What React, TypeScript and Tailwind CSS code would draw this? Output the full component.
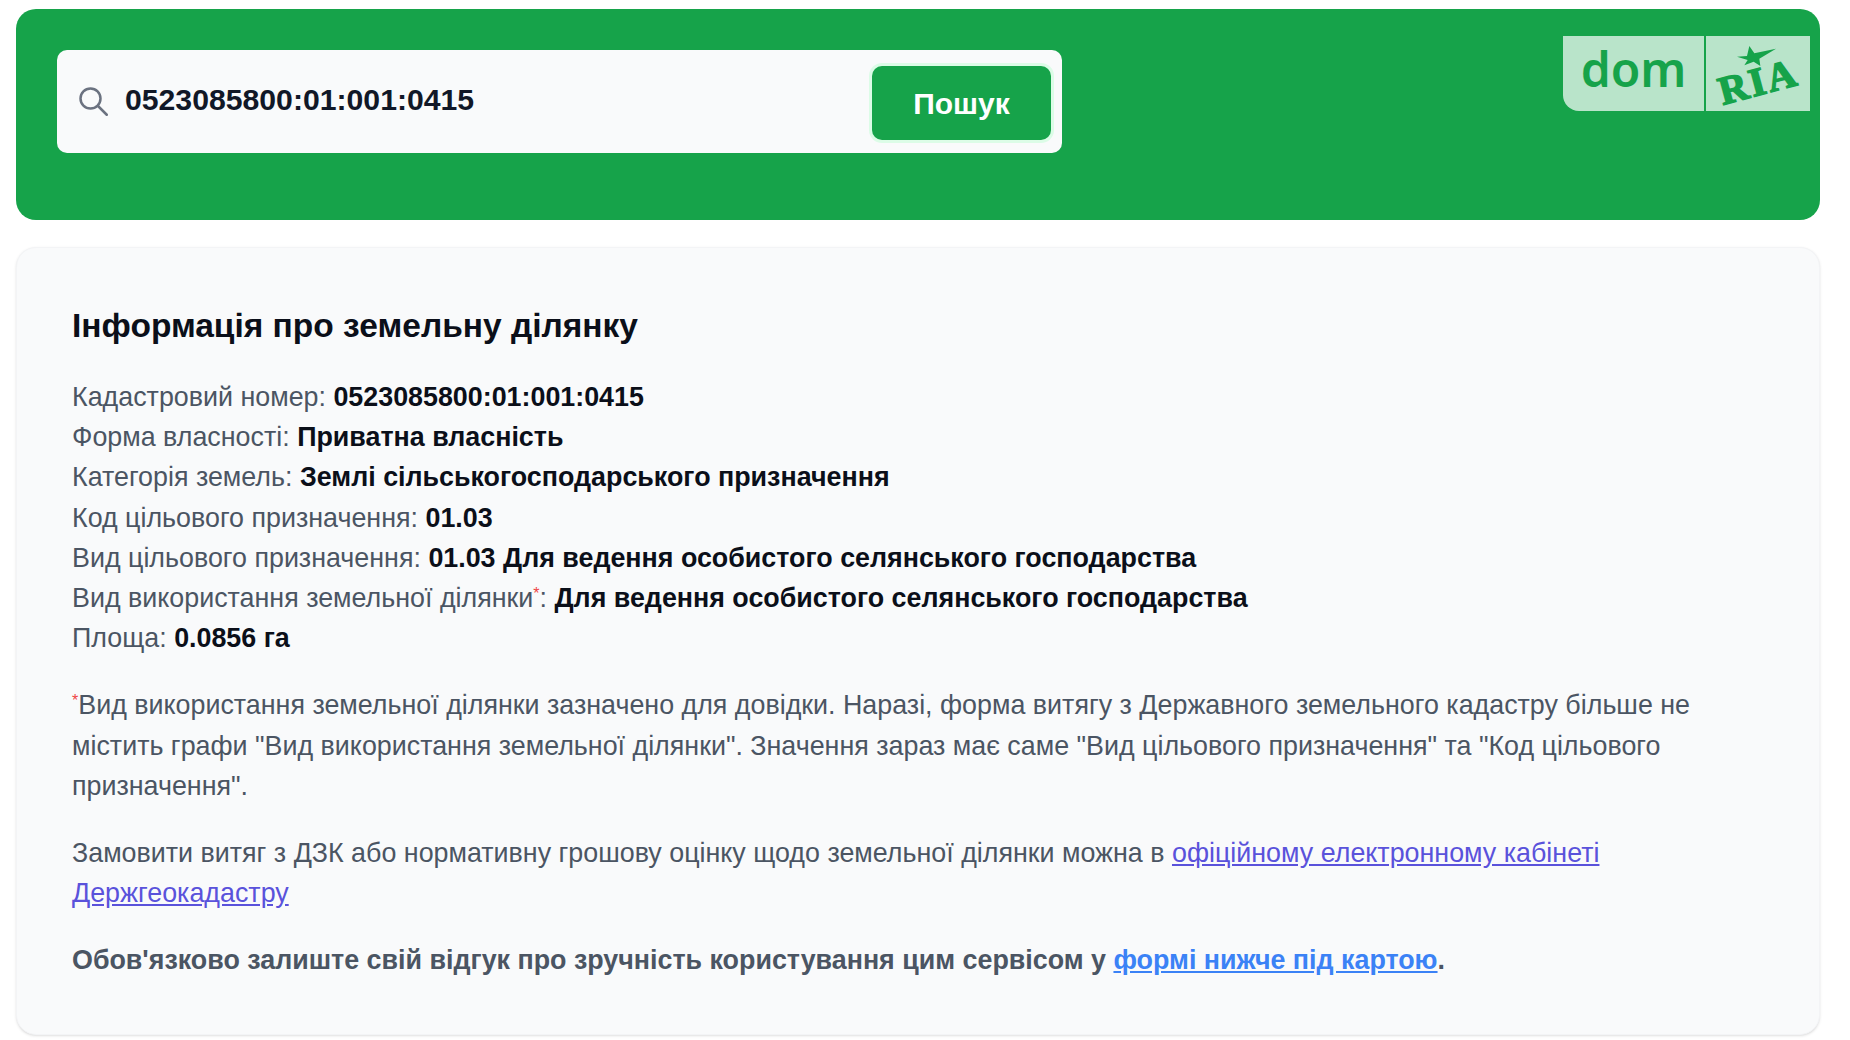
function Star() {
  return (
    <svg viewBox="0 0 117 60" className="absolute left-[31px] top-[10px] h-[20px] w-[39px]" fill="#16a34a">
      <polygon points="0,32 30,30 37,0 52,22 117,8 67,38 70,60 50,47 22,58 32,42" />
    </svg>
  );
}

function Logo() {
  return (
    <div className="flex h-[75px] w-[247px] gap-[2px]">
      <div className="flex w-[141px] items-center justify-center rounded-bl-[16px] bg-[#b9e4ca] pb-[9px] font-['Noto_Sans',sans-serif] text-[48px] font-semibold leading-none text-[#16a34a]">
        dom
      </div>
      <div className="relative flex-1 bg-[#b9e4ca]">
        <Star />
        <div className="absolute left-[12px] top-[26px] -rotate-[15deg] font-['Liberation_Serif',serif] text-[40px] font-bold leading-none tracking-[2.5px] text-[#16a34a] [-webkit-text-stroke:1.5px_#16a34a]">
          RIA
        </div>
      </div>
    </div>
  );
}

function Row({ label, value, star }: { label: string; value: string; star?: boolean }) {
  return (
    <div>
      {label}
      {star && <sup className="text-[16px] leading-none text-[#ef4444]">*</sup>}
      {": "}
      <b className="font-bold text-[#0b0f19]">{value}</b>
    </div>
  );
}

export default function App() {
  return (
    <div className="bg-white pb-[7px] pl-4 pr-[30px] pt-[9px] font-['Liberation_Sans',Arial,sans-serif]">
      <header className="flex h-[211px] items-start justify-between rounded-[20px] bg-[#16a34a] pl-[41px] pr-[10px] pt-[27px]">
        <div className="mt-[14px] flex h-[103px] w-[1005px] items-center rounded-[10px] bg-[#f9fafb] pl-[21px] pr-[11px]">
          <svg viewBox="0 0 24 24" className="mb-[2px] h-[30px] w-[30px] shrink-0" fill="none" stroke="#6b7280" strokeWidth="2" strokeLinecap="round">
            <circle cx="10" cy="10" r="8" />
            <line x1="16" y1="16" x2="23" y2="23" />
          </svg>
          <input
            readOnly
            value="0523085800:01:001:0415"
            className="mb-[3px] ml-[17px] min-w-0 flex-1 bg-transparent text-[30.2px] font-bold text-[#111827] outline-none"
          />
          <button className="mt-[3px] h-[74px] w-[179px] shrink-0 rounded-[10px] bg-[#16a34a] text-[30px] font-bold text-white ring-[3px] ring-[#dcfce7]">
            Пошук
          </button>
        </div>
        <Logo />
      </header>
      <main className="mt-[27px] rounded-[20px] border border-[#f3f4f6] bg-[#f9fafb] px-[55px] pb-[53px] pt-[58px] text-[26.85px] leading-[40.2px] text-[#4b5563] shadow-sm">
        <h1 className="mb-[31px] text-[33.5px] font-bold leading-[40px] text-[#0b0f19]">Інформація про земельну ділянку</h1>
        <div>
          <Row label="Кадастровий номер" value="0523085800:01:001:0415" />
          <Row label="Форма власності" value="Приватна власність" />
          <Row label="Категорія земель" value="Землі сільськогосподарського призначення" />
          <Row label="Код цільового призначення" value="01.03" />
          <Row label="Вид цільового призначення" value="01.03 Для ведення особистого селянського господарства" />
          <Row label="Вид використання земельної ділянки" value="Для ведення особистого селянського господарства" star />
          <Row label="Площа" value="0.0856 га" />
        </div>
        <p className="mt-[27px]">
          <sup className="text-[16px] leading-none text-[#ef4444]">*</sup>
          Вид використання земельної ділянки зазначено для довідки. Наразі, форма витягу з Державного земельного кадастру більше не містить графи "Вид використання земельної ділянки". Значення зараз має саме "Вид цільового призначення" та "Код цільового призначення".
        </p>
        <p className="mt-[27px]">
          Замовити витяг з ДЗК або нормативну грошову оцінку щодо земельної ділянки можна в{" "}
          <a href="#" className="text-[#5a52db] underline">офіційному електронному кабінеті Держгеокадастру</a>
        </p>
        <p className="mt-[27px] font-bold">
          Обов'язково залиште свій відгук про зручність користування цим сервісом у{" "}
          <a href="#" className="text-[#3b82f6] underline">формі нижче під картою</a>.
        </p>
      </main>
    </div>
  );
}
